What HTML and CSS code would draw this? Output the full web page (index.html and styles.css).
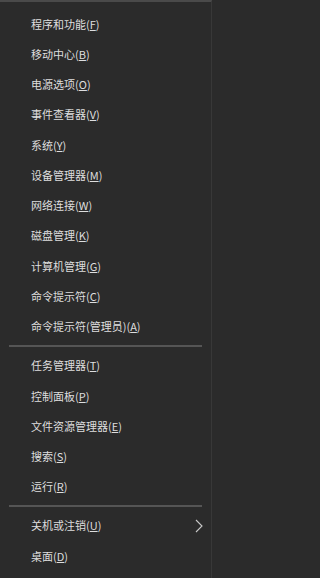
FILE: index.html
```html
<!DOCTYPE html>
<html lang="zh-CN">
<head>
<meta charset="utf-8">
<title>Win+X 菜单</title>
<link rel="stylesheet" href="styles.css">
</head>
<body>
<div class="menu">
  <div class="item">程序和功能(<u>F</u>)</div>
  <div class="item">移动中心(<u>B</u>)</div>
  <div class="item">电源选项(<u>O</u>)</div>
  <div class="item">事件查看器(<u>V</u>)</div>
  <div class="item">系统(<u>Y</u>)</div>
  <div class="item">设备管理器(<u>M</u>)</div>
  <div class="item">网络连接(<u>W</u>)</div>
  <div class="item">磁盘管理(<u>K</u>)</div>
  <div class="item">计算机管理(<u>G</u>)</div>
  <div class="item">命令提示符(<u>C</u>)</div>
  <div class="item">命令提示符(管理员)(<u>A</u>)</div>
  <div class="sep"></div>
  <div class="item">任务管理器(<u>T</u>)</div>
  <div class="item">控制面板(<u>P</u>)</div>
  <div class="item">文件资源管理器(<u>E</u>)</div>
  <div class="item">搜索(<u>S</u>)</div>
  <div class="item">运行(<u>R</u>)</div>
  <div class="sep"></div>
  <div class="item has-sub"><span>关机或注销(<u>U</u>)</span><svg class="chev" width="8" height="14" viewBox="0 0 8 14"><path d="M1 1 L7 7 L1 13" fill="none" stroke="#c8c8c8" stroke-width="1.1"/></svg></div>
  <div class="item">桌面(<u>D</u>)</div>
</div>
</body>
</html>
```
FILE: styles.css
```css
html, body {
  margin: 0;
  padding: 0;
  background: #2b2b2b;
}
.menu {
  box-sizing: border-box;
  width: 212px;
  height: 578px;
  padding-top: 7px;
  border-top: 2px solid #4a4a4a;
  border-right: 1px solid #383838;
  background: #2b2b2b;
  font-family: "Noto Sans CJK SC", "Noto Sans", sans-serif;
  font-size: 11px;
  color: #dedede;
}
.item {
  height: 30.27px;
  display: flex;
  align-items: center;
  padding-left: 31px;
  padding-right: 8px;
  line-height: 1;
  white-space: nowrap;
}
.item u {
  text-decoration-thickness: 1px;
  text-underline-offset: 1px;
}
.has-sub {
  justify-content: space-between;
}
.chev {
  display: block;
}
.sep {
  height: 8.7px;
  display: flex;
  align-items: center;
  padding: 0 9px;
}
.sep::before {
  content: "";
  flex: 1;
  height: 2px;
  background: #555555;
}
```
